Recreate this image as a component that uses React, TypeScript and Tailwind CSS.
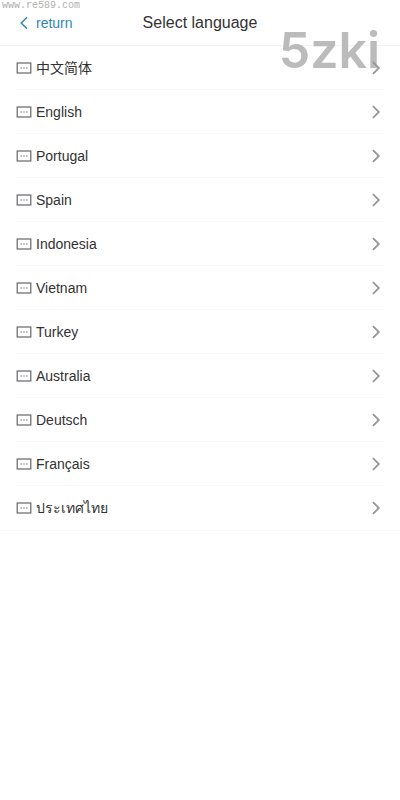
/**
 * Language picker: header bar with a back link and a list of languages.
 */

const LANGUAGES = [
  { code: 'zh-CN', name: '中文简体' },
  { code: 'en', name: 'English' },
  { code: 'pt', name: 'Portugal' },
  { code: 'es', name: 'Spain' },
  { code: 'id', name: 'Indonesia' },
  { code: 'vi', name: 'Vietnam' },
  { code: 'tr', name: 'Turkey' },
  { code: 'en-AU', name: 'Australia' },
  { code: 'de', name: 'Deutsch' },
  { code: 'fr', name: 'Français' },
  { code: 'th', name: 'ประเทศไทย' },
]

export default function App() {
  return (
    <div className="relative min-h-screen bg-white font-['Liberation_Sans','Noto_Sans_CJK_SC','Noto_Sans',sans-serif] text-[#323233]">
      {/* Watermarks */}
      <span className="pointer-events-none absolute left-0.5 top-0 font-['Liberation_Mono',monospace] text-[10px] leading-3 text-[#b0b0b0]">
        www.re589.com
      </span>
      <span className="pointer-events-none absolute right-5 top-4 font-['Inter',sans-serif] text-[50px] font-semibold leading-[68px] text-[#bbbbbb]">
        5zki
      </span>

      {/* Header */}
      <header className="grid h-[46px] grid-cols-[1fr_auto_1fr] items-center border-b border-[#f3f4f5] px-4">
        <a href="#back" className="flex items-center gap-1 text-sm text-[#3086b5]">
          <ChevronLeft />
          return
        </a>
        <h1 className="text-base">Select language</h1>
      </header>

      {/* Languages */}
      <ul className="border-b border-[#f6f7f8]">
        {LANGUAGES.map((language) => (
          <li key={language.code} className="group px-4">
            <button
              type="button"
              lang={language.code}
              className="relative flex h-11 w-full items-center gap-1 border-b border-[#f6f7f8] text-left text-sm group-last:border-b-0"
            >
              <MessageIcon />
              <span className="flex-1">{language.name}</span>
              <ChevronRight />
            </button>
          </li>
        ))}
      </ul>
    </div>
  )
}

function ChevronLeft() {
  return (
    <svg width="16" height="16" viewBox="0 0 16 16" fill="none" stroke="currentColor" strokeWidth="1.4" aria-hidden="true">
      <path d="M11 2.2 5.2 8l5.8 5.8" />
    </svg>
  )
}

function ChevronRight() {
  return (
    <svg width="16" height="16" viewBox="0 0 16 16" fill="none" stroke="#969799" strokeWidth="1.8" aria-hidden="true">
      <path d="M5 2.2 10.8 8 5 13.8" />
    </svg>
  )
}

function MessageIcon() {
  return (
    <svg width="16" height="16" viewBox="0 0 16 16" fill="none" aria-hidden="true">
      <rect x="1.2" y="3" width="13.6" height="10" stroke="#646568" strokeWidth="1.2" />
      <path d="M4.5 8h1.4M7.3 8h1.4M10.1 8h1.4" stroke="#646568" strokeWidth="1.2" />
    </svg>
  )
}
